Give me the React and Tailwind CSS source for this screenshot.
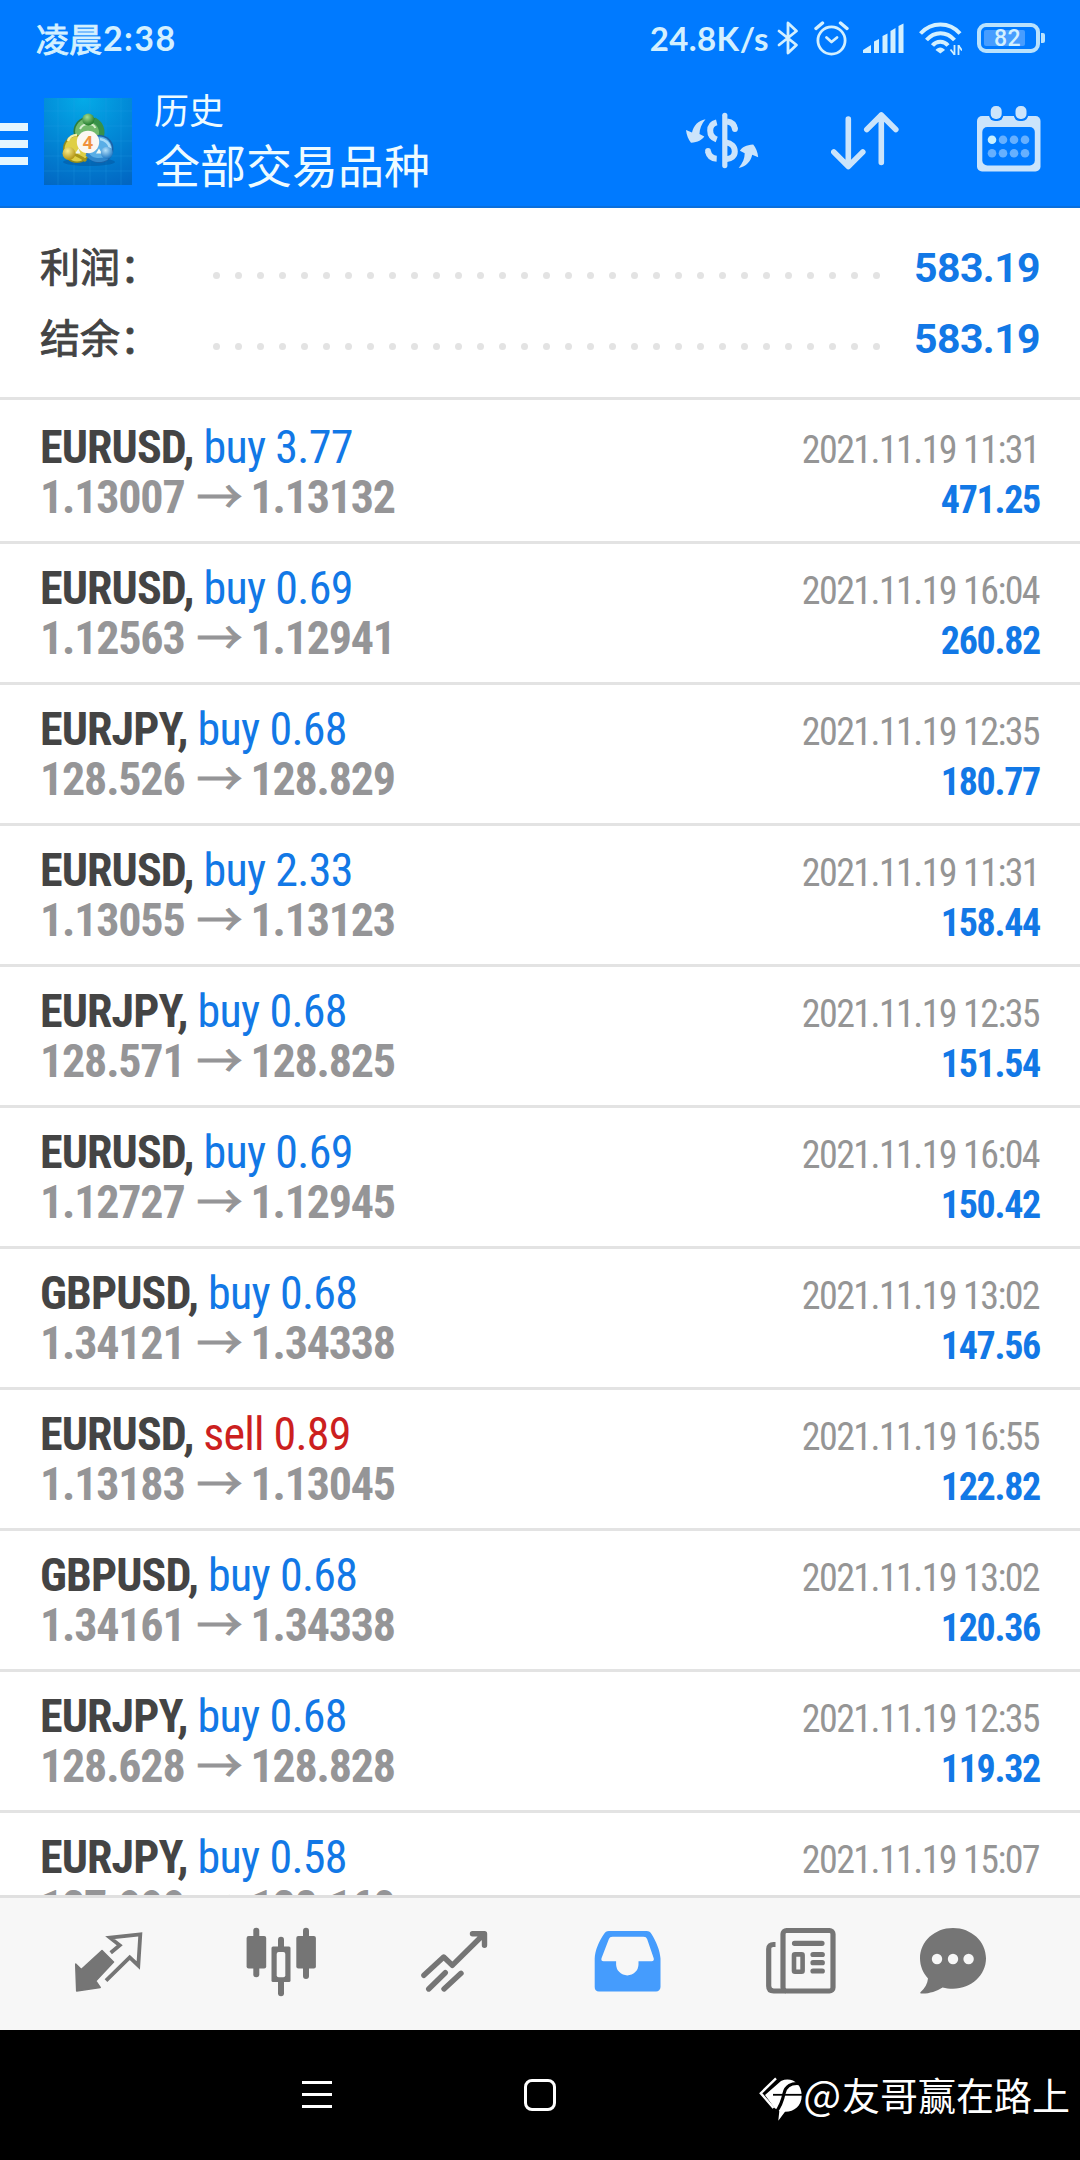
/**
 * History screen — list of closed deals
 *
 * Status bar, toolbar, totals, deals and the bottom tab bar.
 */

const TOTALS = [
  { label: "利润：", value: "583.19" },
  { label: "结余：", value: "583.19" },
];

const DEALS = [
  { symbol: "EURUSD", side: "buy", lots: "3.77", open: "1.13007", close: "1.13132", time: "2021.11.19 11:31", profit: "471.25" },
  { symbol: "EURUSD", side: "buy", lots: "0.69", open: "1.12563", close: "1.12941", time: "2021.11.19 16:04", profit: "260.82" },
  { symbol: "EURJPY", side: "buy", lots: "0.68", open: "128.526", close: "128.829", time: "2021.11.19 12:35", profit: "180.77" },
  { symbol: "EURUSD", side: "buy", lots: "2.33", open: "1.13055", close: "1.13123", time: "2021.11.19 11:31", profit: "158.44" },
  { symbol: "EURJPY", side: "buy", lots: "0.68", open: "128.571", close: "128.825", time: "2021.11.19 12:35", profit: "151.54" },
  { symbol: "EURUSD", side: "buy", lots: "0.69", open: "1.12727", close: "1.12945", time: "2021.11.19 16:04", profit: "150.42" },
  { symbol: "GBPUSD", side: "buy", lots: "0.68", open: "1.34121", close: "1.34338", time: "2021.11.19 13:02", profit: "147.56" },
  { symbol: "EURUSD", side: "sell", lots: "0.89", open: "1.13183", close: "1.13045", time: "2021.11.19 16:55", profit: "122.82" },
  { symbol: "GBPUSD", side: "buy", lots: "0.68", open: "1.34161", close: "1.34338", time: "2021.11.19 13:02", profit: "120.36" },
  { symbol: "EURJPY", side: "buy", lots: "0.68", open: "128.628", close: "128.828", time: "2021.11.19 12:35", profit: "119.32" },
  { symbol: "EURJPY", side: "buy", lots: "0.58", open: "127.999", close: "128.160", time: "2021.11.19 15:07", profit: "" },
];

function StatusBar() {
  return (
    <div className="h-[76px] pl-[36px] pr-[35px] flex items-center justify-between text-[#d3f0ff]">
      <div className="flex items-center text-[33px] leading-[40px]">
        <span className="font-['Noto_Sans_CJK_SC',sans-serif] [-webkit-text-stroke:0.9px]">凌晨</span>
        <span className="font-['Lato',sans-serif] font-bold text-[34px] tracking-[1.4px] ml-[1px]">2:38</span>
      </div>
      <div className="flex items-center">
        <span className="font-['Lato',sans-serif] font-bold text-[33px] leading-[40px] tracking-[0.4px] mr-[8px]">
          24.8K/s
        </span>
        {/* Bluetooth */}
        <svg width="22" height="34" viewBox="0 0 22 34" className="mr-[15px]" fill="none" stroke="currentColor" strokeWidth="2.8" strokeLinejoin="round" strokeLinecap="round">
          <path d="M2 10 19.5 24 11 32V2l8.5 8L2 24" />
        </svg>
        {/* Alarm */}
        <svg width="35" height="35" viewBox="0 0 35 35" className="mr-[14px]" fill="none" stroke="currentColor" strokeWidth="2.8" strokeLinecap="round" strokeLinejoin="round">
          <circle cx="17.5" cy="19.5" r="13.6" />
          <path d="M12.5 16.500l5 4.500 5.500-4.500" />
          <path d="M2 7.500 8.500 2M33 7.500 26.500 2" strokeWidth="3.4" />
        </svg>
        {/* Signal */}
        <svg width="41" height="30" viewBox="0 0 41 30" className="mr-[15px]" fill="currentColor">
          <path d="M0 30v-3l8-5v8zM11 30V18.500l5-2.500v14zM19.500 30V13l5-2.500V30zM27.500 30V8l5-3v25zM35.500 30V3l5-2.500V30z" />
        </svg>
        {/* Wi-Fi */}
        <svg width="43" height="33" viewBox="0 0 43 33" className="mr-[15px]" fill="none" stroke="currentColor" strokeWidth="4">
          <path d="M1.500 11.500C12.500-.500 30.500-.500 41 11.500" />
          <path d="M7.500 18C15.500 9 27.500 9 35.500 18" />
          <path d="M13.500 23.500c4-5 11.500-5 15.500 0" />
          <path d="M16.500 28c2.500-3.500 7-3.500 9.500 0l-4.700 3.500z" fill="currentColor" stroke="none" />
          <path d="M35.500 23v10M39.500 33V23" strokeWidth="1.8" />
          <path d="M31.500 27.500l4 5M43 28.500l-3.500-5" strokeWidth="1.8" />
        </svg>
        {/* Battery */}
        <div className="flex items-center">
          <div className="w-[63px] h-[30px] rounded-[9px] border-4 border-[#b9e2fd] p-[3px] flex">
            <div className="w-[41px] h-[16px] rounded-[2px] bg-[#479dff] flex items-center justify-center">
              <span className="font-['Roboto',sans-serif] font-medium text-[23px] leading-none pl-[6px] tracking-[0.5px]">82</span>
            </div>
          </div>
          <div className="w-[4px] h-[10px] ml-[1px] rounded-r-[2px] bg-[#b9e2fd]" />
        </div>
      </div>
    </div>
  );
}

function AppLogo() {
  return (
    <svg width="88" height="87" viewBox="0 0 88 87">
      <defs>
        <radialGradient id="logoBg" cx="0.45" cy="0" r="1.1">
          <stop offset="0" stopColor="#04abe8" />
          <stop offset="0.5" stopColor="#0288d6" />
          <stop offset="1" stopColor="#0266c2" />
        </radialGradient>
        <radialGradient id="ballGreen" cx="0.4" cy="0.3" r="0.7">
          <stop offset="0" stopColor="#a5dc94" />
          <stop offset="1" stopColor="#1f7a2b" />
        </radialGradient>
        <radialGradient id="ballYellow" cx="0.4" cy="0.3" r="0.7">
          <stop offset="0" stopColor="#f8ec8c" />
          <stop offset="1" stopColor="#b39413" />
        </radialGradient>
        <radialGradient id="ballBlue" cx="0.4" cy="0.3" r="0.7">
          <stop offset="0" stopColor="#b5e2fb" />
          <stop offset="1" stopColor="#1f78c4" />
        </radialGradient>
      </defs>
      <rect width="88" height="87" fill="url(#logoBg)" />
      <path d="M14 0v87M30 0v87M46 0v87M62 0v87M77 0v87M0 13h88M0 28h88M0 43h88M0 58h88M0 73h88" stroke="#2aa0e6" strokeOpacity="0.25" />
      <ellipse cx="45" cy="64" rx="26" ry="4" fill="#024a92" fillOpacity="0.4" />
      {/* three interlocked figures */}
      <circle cx="44.3" cy="33.5" r="14.8" fill="#2c7d3c" />
      <circle cx="44.3" cy="33.5" r="13.2" fill="#72b96c" />
      <path d="M50 22c9 5 10 15 4 22" fill="none" stroke="#37914a" strokeWidth="5.5" />
      <path d="M36 31c2-4 5-5 8.300-5s6 1 7 4" fill="none" stroke="#d6efcf" strokeWidth="2" />
      <circle cx="33" cy="51" r="14" fill="#8f8a1e" />
      <circle cx="33" cy="51" r="12.4" fill="#dfcf45" />
      <path d="M24 43c1-4 5-6 9-6" fill="none" stroke="#f6efa5" strokeWidth="2.5" />
      <path d="M30 56c4 2 8 3 12 7" fill="none" stroke="#a99617" strokeWidth="3" />
      <circle cx="55.5" cy="51" r="14" fill="#1b62a8" />
      <circle cx="55.5" cy="51" r="12.4" fill="#5aaee6" />
      <path d="M43 56c4 6 12 8 20 4" fill="none" stroke="#2f86cc" strokeWidth="4" />
      <path d="M56 41c6 1 9 4 10 9" fill="none" stroke="#a9dbf8" strokeWidth="2.5" />
      <path d="M31 55.500l3.500-5 2 5zM52 55.500l3-5 3 5z" fill="#eef8f4" />
      <circle cx="44.3" cy="21.5" r="6" fill="url(#ballGreen)" />
      <circle cx="25" cy="55.5" r="6.5" fill="url(#ballYellow)" />
      <circle cx="62.8" cy="54.7" r="6" fill="url(#ballBlue)" />
      <circle cx="44" cy="44" r="11.2" fill="#fbf7f2" />
      <text x="44" y="50.5" textAnchor="middle" fontSize="18" fontWeight="700" fontFamily="Open Sans, sans-serif" fill="#f0923e">
        4
      </text>
    </svg>
  );
}

function Toolbar() {
  return (
    <div className="h-[130px] flex items-start text-[#cbe4fb]">
      <div className="w-[28px] mt-[47px] flex flex-col gap-[9px]">
        <div className="h-[8px] bg-[#e4f6ff]" />
        <div className="h-[8px] bg-[#e4f6ff]" />
        <div className="h-[8px] bg-[#e4f6ff]" />
      </div>
      <div className="ml-[16px] mt-[22px]">
        <AppLogo />
      </div>
      <div className="ml-[22px] mt-[10px] text-[#eefbff] font-['Noto_Sans_CJK_SC',sans-serif]">
        <div className="text-[35px] leading-[46px]">历史</div>
        <div className="text-[46px] leading-[62px]">全部交易品种</div>
      </div>
      <div className="ml-auto mr-[39px] flex items-start">
        {/* Currency exchange */}
        <svg width="74" height="58" viewBox="0 0 74 58" className="mt-[36px] mr-[71px]" fill="none" stroke="currentColor">
          <g fill="currentColor" stroke="none">
            <rect x="36.2" y="0.7" width="5.2" height="55.5" rx="2.6" />
            <path d="M0 18l6 2.500C7.500 14 12 8.500 19.500 7.300 15.500 12 13.500 17 13.500 22l4.800 2.500C16 28 12 30.200 5 30.700 2.500 28 .500 23 0 18z" />
            <path transform="rotate(180 36.1 31.65)" d="M0 18l6 2.500C7.500 14 12 8.500 19.500 7.300 15.500 12 13.500 17 13.500 22l4.800 2.500C16 28 12 30.200 5 30.700 2.500 28 .500 23 0 18z" />
          </g>
          <path d="M41 9.500c4.500.500 7.500 3.500 8 8" strokeWidth="6" />
          <circle cx="48.9" cy="17" r="2.9" fill="currentColor" stroke="none" />
          <path d="M40 30.500c5 .500 8.800 4 8.800 9 0 4.500-3.800 7.500-8.800 7.700" strokeWidth="6" />
          <path d="M30.700 10.300c-4.200 1-6.500 4-6.500 8.200 0 4.500 2.300 7.500 6.500 9" strokeWidth="6" />
          <path d="M22 39.500c1 4.500 4 7 8.700 7.200" strokeWidth="6" />
          <circle cx="22" cy="39" r="2.9" fill="currentColor" stroke="none" />
        </svg>
        {/* Sort */}
        <svg width="68" height="60" viewBox="0 0 68 60" className="mt-[35px] mr-[78px]" fill="none" stroke="currentColor" strokeWidth="5.6" strokeLinecap="round" strokeLinejoin="round">
          <path d="M17.300 8v46M2.800 41l14.500 14.500L31.800 41" />
          <path d="M50.300 51.500V4M35.800 18.500 50.300 4l14.500 14.500" />
        </svg>
        {/* Calendar */}
        <svg width="64" height="68" viewBox="0 0 64 68" className="mt-[29px]">
          <rect y="11" width="63.5" height="55.5" rx="5" fill="currentColor" />
          <rect x="5.3" y="22" width="52.5" height="38.5" rx="5" fill="#007aff" />
          <rect x="12" y="-1" width="14.4" height="17" rx="6" fill="#007aff" />
          <rect x="36.8" y="-1" width="14.4" height="17" rx="6" fill="#007aff" />
          <rect x="13.7" y="1" width="11" height="13" rx="5" fill="currentColor" />
          <rect x="38.5" y="1" width="11" height="13" rx="5" fill="currentColor" />
          <g fill="#66b0ff">
            <circle cx="15" cy="34.7" r="4.3" fill="#c9f0ff" />
            <circle cx="26" cy="34.7" r="4.3" />
            <circle cx="37" cy="34.7" r="4.3" />
            <circle cx="48" cy="34.7" r="4.3" />
            <circle cx="15" cy="48.3" r="4.3" />
            <circle cx="26" cy="48.3" r="4.3" />
            <circle cx="37" cy="48.3" r="4.3" />
            <circle cx="48" cy="48.3" r="4.3" />
          </g>
        </svg>
      </div>
    </div>
  );
}

function TotalRow({ label, value }) {
  return (
    <div className="h-[71px] flex items-center">
      <span className="w-[173px] -mt-[5px] font-['Noto_Sans_CJK_SC',sans-serif] text-[40px] leading-[60px] text-[#444444] [-webkit-text-stroke:0.9px]">
        {label}
      </span>
      <span className="w-[667px] mt-[15px] flex justify-between">
        {Array.from({ length: 31 }, (_, i) => (
          <span key={i} className="size-[7px] rounded-full bg-[#e3e3e3]" />
        ))}
      </span>
      <span className="ml-auto font-['Roboto',sans-serif] font-bold text-[41px] leading-[60px] tracking-[-0.6px] text-[#1278e6]">
        {value}
      </span>
    </div>
  );
}

function DealRow({ deal }) {
  return (
    <div className="h-[141px] shrink-0 border-b-3 border-[#e3e3e3] pt-[19px] px-[40px] font-['Roboto_Condensed',sans-serif] whitespace-nowrap">
      <div className="h-[50px] flex items-baseline justify-between leading-[50px]">
        <div className="text-[46px]">
          <span className="font-bold text-[#444444] tracking-[-0.9px]">{deal.symbol},</span>
          <span className={deal.side === "sell" ? "text-[#cc1f1f] tracking-[-0.8px]" : "text-[#1278e6] tracking-[-0.7px]"}>
            {" "}{deal.side} {deal.lots}
          </span>
        </div>
        <div className="text-[38px] text-[#959595] tracking-[-1.6px] pr-[1px]">{deal.time}</div>
      </div>
      <div className="h-[50px] flex items-baseline justify-between leading-[50px]">
        <div className="text-[46px] font-bold text-[#959597] tracking-[-1.2px] flex items-baseline">
          <span>{deal.open}</span>
          <span className="w-[66px] flex justify-center pl-[4px] font-['Noto_Sans_CJK_SC',sans-serif] font-normal tracking-normal leading-[20px] [-webkit-text-stroke:1px]">→</span>
          <span>{deal.close}</span>
        </div>
        <div className="text-[38px] font-bold text-[#1278e6] tracking-[-1.3px]">{deal.profit}</div>
      </div>
    </div>
  );
}

function TabBar() {
  return (
    <div className="h-[135px] shrink-0 bg-[#f7f7f7] border-t-3 border-[#e0e0e0] pl-[75px] flex items-start text-[#757575]">
      {/* Quotes */}
      <svg width="68" height="62" viewBox="0 0 68 62" className="mt-[34px] mr-[103px]">
        <path d="M.700 32l5.600 5.500L27 18.500l11.500 11.500-17.800 19 4.500 6.500L1.700 59z" fill="currentColor" stroke="currentColor" strokeWidth="1.5" strokeLinejoin="round" />
        <path d="M35.700 20.700l9-7.400L35 5.700l30.300-3.400-2 31.200-8.600-8.200L31 48.700" fill="none" stroke="currentColor" strokeWidth="3.8" />
      </svg>
      {/* Chart */}
      <svg width="71" height="70" viewBox="0 0 71 70" className="mt-[29px] mr-[104px]" fill="currentColor">
        <rect x="7.3" y="0.7" width="6" height="49.6" rx="3" />
        <rect x="0.6" y="9" width="19.6" height="32.5" rx="2" />
        <rect x="32" y="9.7" width="6" height="59.5" rx="3" />
        <rect x="25.5" y="19.5" width="19" height="35.5" rx="1.5" />
        <rect x="30.7" y="25" width="8.6" height="25.3" rx="2" fill="#f7f7f7" />
        <rect x="57" y="0.7" width="6" height="51.3" rx="3" />
        <rect x="50.3" y="9" width="19.6" height="32.5" rx="2" />
      </svg>
      {/* Trade */}
      <svg width="67" height="63" viewBox="0 0 67 63" className="mt-[32px] mr-[106px]" fill="none" stroke="currentColor" strokeWidth="5.4" strokeLinecap="round" strokeLinejoin="round">
        <path d="M2.900 45.300 22.700 27l8.600 8.300L62.500 4.500M51.500 3.800h12v11.500" />
        <path d="M7.700 59l16.600-16.300M23 59l17-15.700" />
      </svg>
      {/* History */}
      <svg width="67" height="62" viewBox="0 0 67 62" className="mt-[32px] mr-[105px]">
        <path fill="#459cfd" fillRule="evenodd" d="M15 1h37.500c2.500 0 4 1 5 3 4.500 7 8.500 16.500 9 24.500V57a4.500 4.500 0 0 1-4.500 4.500H5A4.500 4.500 0 0 1 .700 57V28.500C1 20.500 5 11 10 4c1.200-2 2.500-3 5-3zM18.500 6.700h31c2 0 3 .800 3.700 2.500l6.500 19c.500 1.800-.300 3-2 3H44.500v3a11.200 11.200 0 0 1-22.400 0v-3H9.500c-1.800 0-2.500-1.200-2-3l7.300-19c.700-1.700 1.700-2.500 3.700-2.500z" />
      </svg>
      {/* News */}
      <svg width="70" height="68" viewBox="0 0 70 68" className="mt-[29px] mr-[84px]" fill="none" stroke="currentColor" strokeWidth="5.2">
        <rect x="17" y="3.5" width="50" height="60.5" rx="3.5" />
        <path d="M9.500 17.500H7.500c-3 0-4.800 1.800-4.800 4.500v37c0 3.200 1.800 5 5 5H20" />
        <path d="M28.500 16.300h27.500M47 27.500h9.300M47 35.700h9.300M47 44h9.300" strokeLinecap="round" />
        <rect x="28" y="27.4" width="8.6" height="17.3" rx="1" strokeWidth="4.6" />
      </svg>
      {/* Messages */}
      <svg width="67" height="68" viewBox="0 0 67 68" className="mt-[29px]">
        <path fill="currentColor" d="M33 1c18.500 0 33 13.500 33 30.300s-14.500 30.400-33 30.400c-4 0-7-.300-10.500-1.200C16.500 64.500 8 67 1 66.500c-1 0-1-1-.300-1.500C5 61 7.500 57 8 51.500 3 46 0 39 0 31.300 0 14.500 14.500 1 33 1z" />
        <g fill="#f7f7f7">
          <circle cx="17" cy="32" r="5.2" />
          <circle cx="33" cy="32" r="5.2" />
          <circle cx="48.6" cy="32" r="5.2" />
        </g>
      </svg>
    </div>
  );
}

function SystemBar() {
  return (
    <div className="h-[130px] shrink-0 bg-black flex items-center text-white">
      <div className="w-[30px] ml-[302px] -mt-[2px] flex flex-col gap-[9px]">
        <div className="h-[3px] bg-white" />
        <div className="h-[3px] bg-white" />
        <div className="h-[3px] bg-white" />
      </div>
      <div className="size-[32px] ml-[192px] rounded-[8px] border-3 border-white" />
      <div className="ml-auto mr-[10px] flex items-center">
        <svg width="44" height="45" viewBox="0 0 44 45" className="mt-[9px]">
          <path d="M17 1.300 1.800 16.200 14.500 31" fill="none" stroke="#fff" strokeWidth="2.4" />
          <path d="M22 4C32-.500 42.700 6 42.700 18.500 42.700 29 35 35 26 34.800L19.300 43.700l1-9.500L15.500 31 6 18z" fill="#fff" />
          <path d="M43 7C32 5 26.500 9.500 25 16.500 23.500 24 21 30 16.500 36" fill="none" stroke="#000" strokeWidth="3.2" />
          <path d="M14 17.800h29" stroke="#000" strokeWidth="1.8" />
        </svg>
        <span className="-mt-[3px] font-['Noto_Sans_CJK_SC',sans-serif] text-[38px] leading-[50px] whitespace-nowrap">
          <span className="text-[40px] tracking-[1px]">@</span>友哥赢在路上
        </span>
      </div>
    </div>
  );
}

export default function App() {
  return (
    <div className="w-[1080px] h-[2160px] overflow-hidden bg-white flex flex-col">
      <header className="h-[208px] shrink-0 bg-[#007aff] border-b-2 border-[#0a6fdc]">
        <StatusBar />
        <Toolbar />
      </header>

      <main className="flex-1 min-h-0 overflow-hidden flex flex-col">
        <section className="h-[192px] shrink-0 border-b-3 border-[#e3e3e3] pt-[24px] px-[40px]">
          {TOTALS.map((total) => (
            <TotalRow key={total.label} {...total} />
          ))}
        </section>
        <section className="flex flex-col pt-[3px]">
          {DEALS.map((deal, i) => (
            <DealRow key={i} deal={deal} />
          ))}
        </section>
      </main>

      <TabBar />
      <SystemBar />
    </div>
  );
}
